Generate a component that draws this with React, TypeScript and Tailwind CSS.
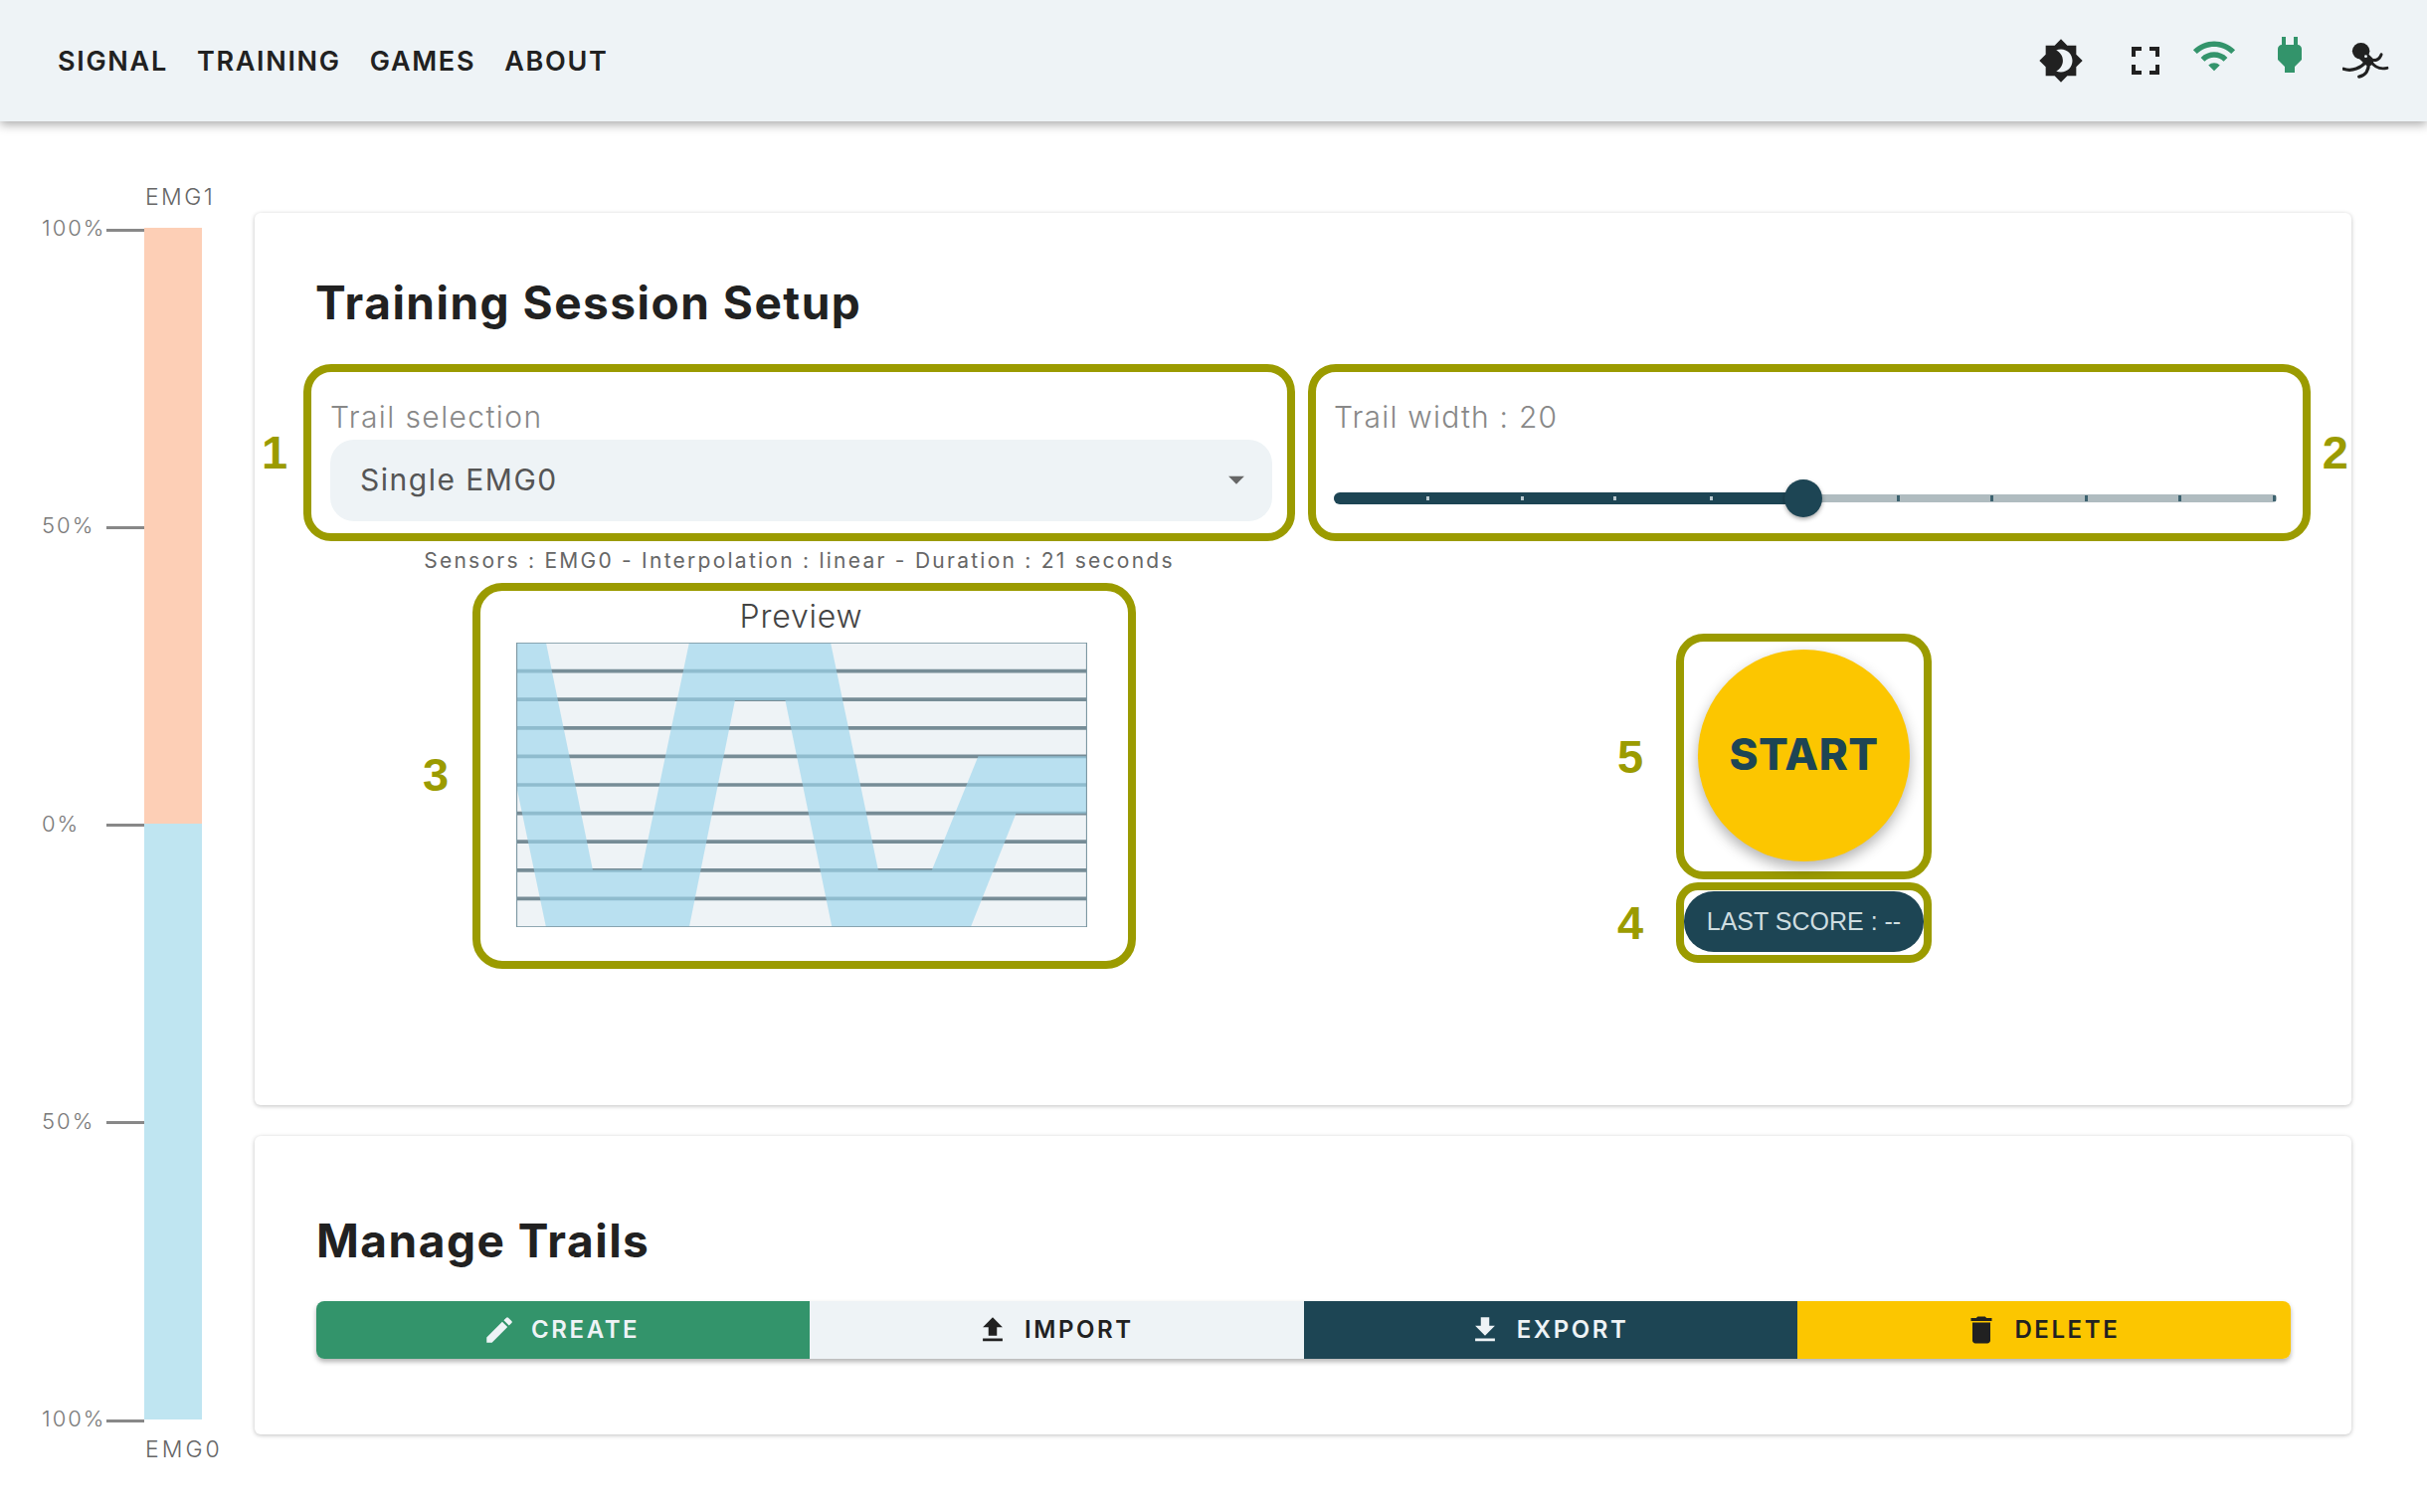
import React from "react";
import { MdBrightness4, MdFullscreen, MdWifi, MdPower, MdEdit, MdFileUpload, MdFileDownload, MdDelete, MdArrowDropDown } from "react-icons/md";

const activeTicks = [93, 188, 281, 378];
const idleTicks = [566, 660, 755, 849, 944];
const gridLines = [1, 2, 3, 4, 5, 6, 7, 8, 9];

function Num({ children, className }: { children: React.ReactNode; className: string }) {
  return (
    <span className={"absolute font-['Liberation_Sans',sans-serif] font-bold text-[47px] leading-none text-[#9b9b00] " + className}>
      {children}
    </span>
  );
}

function Tick({ label }: { label: string }) {
  return (
    <div className="flex h-[4px] items-center">
      <span className="w-[107px] pl-[42px] whitespace-nowrap text-[22px] leading-none font-light tracking-[2px] text-[#777] -translate-y-[2px]">{label}</span>
      <span className="h-[3px] w-[38px] bg-[#888]" />
    </div>
  );
}

function Octopus() {
  return (
    <svg className="mr-[38px] h-[37px] w-[47px]" viewBox="10 12 48 38" fill="none" stroke="#212121" strokeLinecap="round">
      <ellipse cx="29" cy="20.5" rx="9" ry="8.5" fill="#212121" stroke="none" />
      <path d="M30 24 L37 31" strokeWidth="10" />
      <circle cx="34" cy="26" r="1.5" fill="#eef3f6" stroke="none" />
      <path d="M38 29 C44 31 48 30 50 24" strokeWidth="3" />
      <path d="M39 31 C43 37 48 40 56 38" strokeWidth="3" />
      <path d="M37 33 C37 40 34 46 27 47" strokeWidth="3.4" />
      <path d="M35 31 C29 38 20 42 11 39" strokeWidth="3.4" />
    </svg>
  );
}

function ActionButton({ icon, label, className }: { icon: React.ReactNode; label: string; className: string }) {
  return (
    <div className={"flex flex-1 items-center justify-center gap-[15px] pr-[4px] text-[24px] leading-none font-semibold tracking-[2.6px] " + className}>
      <span className="flex items-center justify-center">{icon}</span>
      <span>{label}</span>
    </div>
  );
}

export default function App() {
  return (
    <div className="h-[1520px] w-[2440px] overflow-hidden bg-white font-['Inter','Noto_Sans',sans-serif] text-[#212121]">
      <header className="relative z-10 flex h-[122px] items-center justify-between bg-[#eef3f6] pl-[58px] shadow-[0_3px_10px_rgba(0,0,0,0.35)]">
        <nav className="flex gap-[29px] text-[27px] leading-none font-semibold tracking-[1.7px]">
          <span>SIGNAL</span>
          <span>TRAINING</span>
          <span>GAMES</span>
          <span>ABOUT</span>
        </nav>
        <div className="flex items-center">
          <MdBrightness4 className="mr-[38px] text-[46px] text-[#212121]" />
          <MdFullscreen className="mr-[22px] text-[48px] text-[#212121]" />
          <MdWifi className="mr-[29px] -translate-y-[5px] text-[46px] text-[#33946b]" />
          <MdPower className="mr-[29px] -translate-y-[6px] text-[48px] text-[#33946b]" />
          <Octopus />
        </div>
      </header>

      <main className="flex pt-[62px]">
        <aside className="w-[256px] shrink-0">
          <div className="h-[28px] pl-[146px] text-[23px] leading-[28px] font-light tracking-[2.4px] text-[#666]">EMG1</div>
          <div className="mt-[17px] flex h-[1198px]">
            <div className="flex h-[1201px] w-[145px] flex-col justify-between text-[#777]">
              <Tick label="100%" />
              <Tick label="50%" />
              <Tick label="0%" />
              <Tick label="50%" />
              <Tick label="100%" />
            </div>
            <div className="flex w-[58px] flex-col">
              <div className="flex-1 bg-[#fdcfb6]" />
              <div className="flex-1 bg-[#bfe5f1]" />
            </div>
          </div>
          <div className="mt-[16px] h-[28px] pl-[146px] text-[23px] leading-[28px] font-light tracking-[3px] text-[#666]">EMG0</div>
        </aside>

        <div className="flex w-[2108px] flex-col gap-[31px] pt-[30px]">
          <section className="h-[897px] rounded-[6px] bg-white pt-[55px] pl-[49px] shadow-[0_1px_4px_rgba(0,0,0,0.25)]">
            <h1 className="h-[70px] pl-[12px] text-[46px] leading-[70px] font-bold tracking-[1.5px]">Training Session Setup</h1>
            <div className="mt-[27px] flex gap-[13px]">
              <div className="w-[997px]">
                <div className="relative h-[178px] rounded-[28px] border-[8px] border-[#9b9b00] pt-[29px] pr-[15px] pl-[19px]">
                  <Num className="-left-[50px] top-[57px]">1</Num>
                  <div className="h-[32px] text-[30px] leading-[32px] font-light tracking-[1.4px] text-[#888]">Trail selection</div>
                  <div className="mt-[7px] flex h-[82px] items-center justify-between rounded-[24px] bg-[#eef3f6] pr-[17px] pb-[2px] pl-[30px] text-[30px] tracking-[1.5px] text-[#555]">
                    <span>Single EMG0</span>
                    <MdArrowDropDown className="text-[38px] text-[#666]" />
                  </div>
                </div>
                <div className="mt-[4px] h-[32px] text-center text-[21px] leading-[32px] tracking-[2.25px] text-[#666]">
                  Sensors : EMG0 - Interpolation : linear - Duration : 21 seconds
                </div>
                <div className="relative mt-[6px] ml-[170px] flex h-[388px] w-[667px] flex-col items-center rounded-[30px] border-[8px] border-[#9b9b00]">
                  <Num className="-left-[58px] top-[161px]">3</Num>
                  <div className="mt-[6px] mr-[6px] mb-[6px] h-[40px] text-[32px] leading-[40px] font-light tracking-[0.8px] text-[#444]">Preview</div>
                  <svg className="ml-[36px] h-[286px] w-[574px] self-start" viewBox="0 0 1284 859" preserveAspectRatio="none">
                    <rect x="0" y="0" width="1284" height="859" fill="#eef3f6" />
                    {gridLines.map((n) => (
                      <line key={n} x1="0" x2="1284" y1={n * 85.9} y2={n * 85.9} stroke="#768c96" strokeWidth="11" />
                    ))}
                    <polygon
                      points="0,0 67,0 172,686 282,686 389,0 707,0 814,686 935,686 1039,343 1284,343 1284,516 1124,516 1022,859 710,859 605,174 492,174 389,859 67,859 0,430"
                      fill="rgb(156,214,237)"
                      fillOpacity="0.65"
                    />
                    <rect x="0" y="0" width="1284" height="859" fill="none" stroke="#7d98a3" strokeWidth="5" />
                  </svg>
                </div>
              </div>

              <div className="flex w-[1008px] flex-col">
                <div className="relative h-[178px] rounded-[28px] border-[8px] border-[#9b9b00] px-[18px] pt-[29px]">
                  <Num className="-right-[46px] top-[57px]">2</Num>
                  <div className="h-[32px] text-[30px] leading-[32px] font-light tracking-[1.2px] text-[#888]">Trail width : 20</div>
                  <div className="relative mt-[60px] h-[12px] w-[948px]">
                    <div className="absolute top-[2px] h-[8px] w-full rounded-full bg-[#b0bcc0]" />
                    <div className="absolute top-0 h-[12px] w-[472px] rounded-full bg-[#1d4554]" />
                    {activeTicks.map((x) => (
                      <span key={x} className="absolute top-[4px] h-[4px] w-[3px] bg-[#b8c8ce]" style={{ left: x }} />
                    ))}
                    {idleTicks.map((x) => (
                      <span key={x} className="absolute top-[3px] h-[6px] w-[3px] bg-[#3d626f]" style={{ left: x }} />
                    ))}
                    <span className="absolute -top-[13px] left-[453px] h-[38px] w-[38px] rounded-full bg-[#1d4554] shadow-[0_2px_4px_rgba(0,0,0,0.35)]" />
                  </div>
                </div>
                <div className="relative mt-[93px] ml-[370px] flex h-[247px] w-[257px] items-center justify-center rounded-[28px] border-[8px] border-[#9b9b00] pb-[2px]">
                  <Num className="-left-[67px] top-[92px]">5</Num>
                  <div className="flex h-[213px] w-[213px] items-center justify-center rounded-full bg-[#fcc600] pb-[4px] text-[44px] leading-none font-extrabold tracking-[0.5px] text-[#1d4554] shadow-[0_6px_14px_rgba(0,0,0,0.3)]">
                    START
                  </div>
                </div>
                <div className="relative mt-[3px] ml-[370px] flex h-[81px] w-[257px] items-center justify-center rounded-[22px] border-[8px] border-[#9b9b00] pb-[2px]">
                  <Num className="-left-[67px] top-[9px]">4</Num>
                  <div className="flex h-[61px] w-[242px] items-center justify-center rounded-[30px] bg-[#1d4554] font-['Liberation_Sans',sans-serif] text-[25px] leading-none text-[#cfdde0]">
                    LAST SCORE : --
                  </div>
                </div>
              </div>
            </div>
          </section>

          <section className="h-[300px] rounded-[6px] bg-white px-[62px] pt-[70px] shadow-[0_1px_4px_rgba(0,0,0,0.25)]">
            <h2 className="h-[70px] text-[46px] leading-[70px] font-bold tracking-[1.5px]">Manage Trails</h2>
            <div className="mt-[26px] flex h-[58px] w-[1985px] overflow-hidden rounded-[8px] shadow-[0_3px_5px_rgba(0,0,0,0.3)]">
              <ActionButton icon={<MdEdit className="text-[34px]" />} label="CREATE" className="bg-[#33946b] text-[#eef3f6]" />
              <ActionButton icon={<MdFileUpload className="text-[34px]" />} label="IMPORT" className="bg-[#eef3f6] text-[#212121]" />
              <ActionButton icon={<MdFileDownload className="text-[34px]" />} label="EXPORT" className="bg-[#1d4554] text-[#eef3f6]" />
              <ActionButton icon={<MdDelete className="text-[36px]" />} label="DELETE" className="bg-[#fcc600] text-[#212121]" />
            </div>
          </section>
        </div>
      </main>
    </div>
  );
}
